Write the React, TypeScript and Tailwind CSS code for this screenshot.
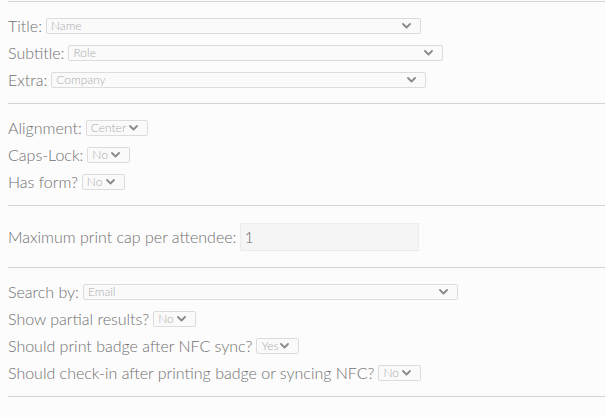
import type { ReactNode } from 'react';

type SelectProps = {
  value: string;
  width: string;
};

function Chevron() {
  return (
    <svg width="9" height="6" viewBox="0 0 9 6" className="shrink-0">
      <path d="M1 1l3.5 3.5L8 1" fill="none" stroke="#8a8a8a" strokeWidth="1.8" strokeLinecap="round" strokeLinejoin="round" />
    </svg>
  );
}

function Select({ value, width }: SelectProps) {
  return (
    <div className={`flex h-[16px] items-center justify-between rounded-[2px] border border-[#dcdcdc] bg-[#fafafa] pl-[4px] pr-[9px] ${width}`}>
      <span className="pt-px text-[12px] font-light leading-[14px] text-[#ababab]">{value}</span>
      <Chevron />
    </div>
  );
}

function Row({ label, children }: { label: string; children: ReactNode }) {
  return (
    <div className="flex h-[27px] items-center gap-[4px]">
      <span className="text-[16px] font-light text-[#707070]">{label}</span>
      {children}
    </div>
  );
}

function Divider() {
  return <div className="h-px bg-[#d4d4d4]" />;
}

export default function App() {
  return (
    <div className="min-h-[417px] w-[605px] bg-[#fcfcfc] pl-2 pt-px font-['Lato',sans-serif]">
      <Divider />
      <div className="py-[10px]">
        <Row label="Title:">
          <Select value="Name" width="w-[375px]" />
        </Row>
        <Row label="Subtitle:">
          <Select value="Role" width="w-[375px]" />
        </Row>
        <Row label="Extra:">
          <Select value="Company" width="w-[375px]" />
        </Row>
      </div>
      <Divider />
      <div className="py-[10px]">
        <Row label="Alignment:">
          <Select value="Center" width="w-[62px]" />
        </Row>
        <Row label="Caps-Lock:">
          <Select value="No" width="w-[43px]" />
        </Row>
        <Row label="Has form?">
          <Select value="No" width="w-[43px]" />
        </Row>
      </div>
      <Divider />
      <div className="py-[10px]">
        <div className="flex h-[41px] items-center gap-[4px]">
          <span className="text-[16px] font-light text-[#707070]">Maximum print cap per attendee:</span>
          <div className="flex h-[28px] w-[179px] items-center border border-[#ebebeb] bg-[#f5f5f5] px-[3px] text-[16px] font-light text-[#707070]">
            1
          </div>
        </div>
      </div>
      <Divider />
      <div className="py-[10px]">
        <Row label="Search by:">
          <Select value="Email" width="w-[375px]" />
        </Row>
        <Row label="Show partial results?">
          <Select value="No" width="w-[43px]" />
        </Row>
        <Row label="Should print badge after NFC sync?">
          <Select value="Yes" width="w-[43px]" />
        </Row>
        <Row label="Should check-in after printing badge or syncing NFC?">
          <Select value="No" width="w-[43px]" />
        </Row>
      </div>
      <Divider />
    </div>
  );
}
